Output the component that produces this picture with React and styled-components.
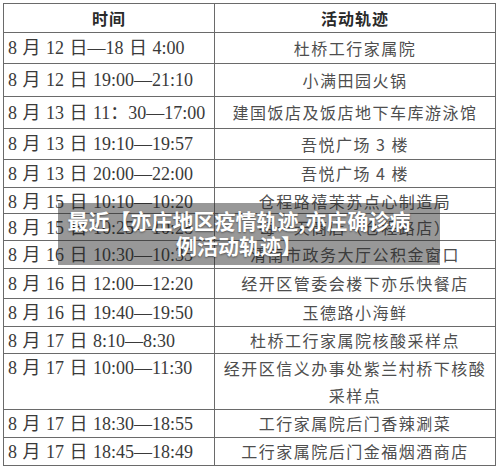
import React from 'react'
import styled, { createGlobalStyle } from 'styled-components'

const rows = [
  { time: '8 月 12 日—18 日 4:00', place: '杜桥工行家属院', h: 31 },
  { time: '8 月 12 日 19:00—21:10', place: '小满田园火锅', h: 33 },
  { time: '8 月 13 日 11：30—17:00', place: '建国饭店及饭店地下车库游泳馆', h: 32 },
  { time: '8 月 13 日 19:10—19:57', place: '吾悦广场 3 楼', h: 31 },
  { time: '8 月 13 日 20:00—22:00', place: '吾悦广场 4 楼', h: 28 },
  { time: '8 月 15 日 10:10—10:20', place: '仓程路禧茉苏点心制造局', h: 26 },
  { time: '8 月 15 日 10:25—10:28', place: '每一天商店（仓程路店）', h: 27 },
  { time: '8 月 16 日 10:30—10:35', place: '渭南市政务大厅公积金窗口', h: 28 },
  { time: '8 月 16 日 12:00—12:20', place: '经开区管委会楼下亦乐快餐店', h: 30 },
  { time: '8 月 16 日 19:40—19:50', place: '玉德路小海鲜', h: 28 },
  { time: '8 月 17 日 8:10—8:30', place: '杜桥工行家属院核酸采样点', h: 27 },
  { time: '8 月 17 日 10:00—11:30', place: '经开区信义办事处紫兰村桥下核酸\n采样点', h: 56, top: true },
  { time: '8 月 17 日 18:30—18:55', place: '工行家属院后门香辣涮菜', h: 28 },
  { time: '8 月 17 日 18:45—18:49', place: '工行家属院后门金福烟酒商店', h: 28 },
]

export default function App() {
  return (
    <>
      <Global />
      <Page>
        <Table>
          <Row $h={29}>
            <HeadCell>时间</HeadCell>
            <HeadCell>活动轨迹</HeadCell>
          </Row>
          {rows.map((r, i) => (
            <Row key={i} $h={r.h}>
              <TimeCell $top={r.top}>{r.time}</TimeCell>
              <PlaceCell>{r.place}</PlaceCell>
            </Row>
          ))}
        </Table>
        <Banner>
          最近【亦庄地区疫情轨迹,亦庄确诊病<br />例活动轨迹】
        </Banner>
      </Page>
    </>
  )
}

const Global = createGlobalStyle`
  body {
    margin: 0;
    background: #fff;
  }
`

const Page = styled.div`
  position: relative;
  width: 500px;
  height: 469px;
  padding: 3px 0 0 3px;
  box-sizing: border-box;
  overflow: hidden;
`

const Table = styled.div`
  width: 493px;
  display: flex;
  flex-direction: column;
  border: 1px solid #6a6a6a;
  border-bottom: none;
  box-sizing: border-box;
  color: #333;
`

const Row = styled.div`
  display: grid;
  grid-template-columns: 211px 1fr;
  height: ${p => p.$h}px;
  border-bottom: 1px solid #6a6a6a;
  box-sizing: border-box;
`

const HeadCell = styled.div`
  display: flex;
  align-items: center;
  justify-content: center;
  font-family: "Noto Sans CJK SC", sans-serif;
  font-weight: 700;
  font-size: 16px;
  letter-spacing: 1px;
  color: #2a2a2a;

  &:first-child {
    border-right: 1px solid #6a6a6a;
  }
`

const TimeCell = styled.div`
  display: flex;
  align-items: ${p => (p.$top ? 'flex-start' : 'center')};
  padding: ${p => (p.$top ? '1px' : '0')} 0 0 4px;
  border-right: 1px solid #6a6a6a;
  font-family: "Liberation Serif", "Noto Sans CJK SC", serif;
  font-size: 18px;
  line-height: 26px;
  word-spacing: 1px;
  color: #3a3a3a;
  white-space: pre;
  overflow: hidden;
`

const PlaceCell = styled.div`
  display: flex;
  align-items: center;
  justify-content: center;
  text-align: center;
  white-space: pre-line;
  font-family: "Noto Sans CJK SC", sans-serif;
  font-size: 16px;
  line-height: 27px;
  letter-spacing: 1.5px;
  color: #4e4e4e;
`

const Banner = styled.div`
  position: absolute;
  left: 58px;
  top: 203px;
  width: 382px;
  height: 62px;
  box-sizing: border-box;
  padding: 5px 28px 0 8px;
  background: rgba(40, 40, 40, 0.48);
  color: #fff;
  font-family: "Noto Sans CJK SC", sans-serif;
  font-weight: 700;
  font-size: 21px;
  line-height: 25px;
  text-align: center;
  text-shadow: 0 1px 2px rgba(0, 0, 0, 0.45);
`
